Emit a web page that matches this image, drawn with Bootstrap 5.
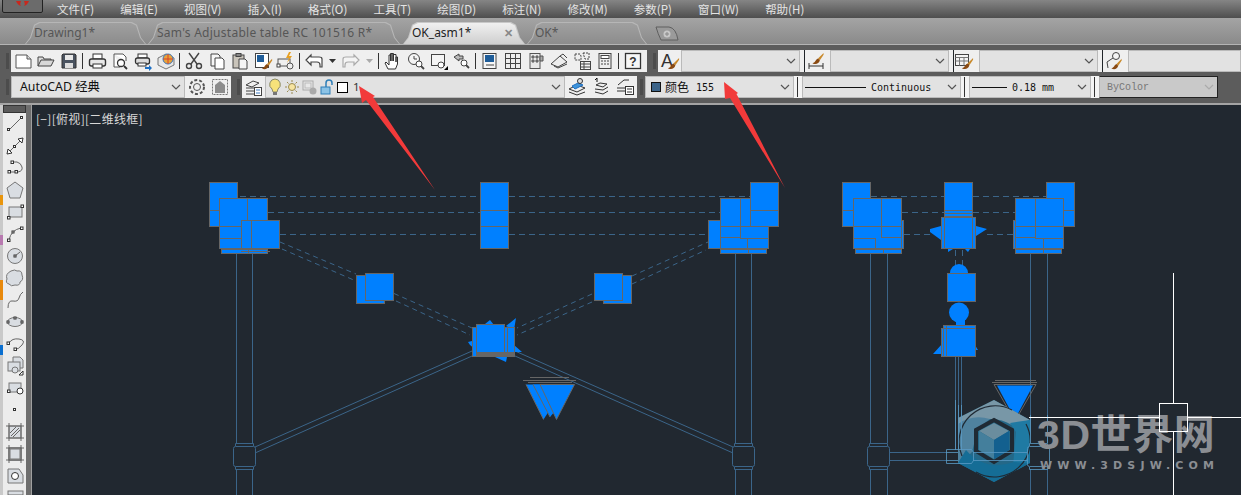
<!DOCTYPE html>
<html lang="en">
<head>
    <meta charset="UTF-8">
    <meta name="viewport" content="width=device-width, initial-scale=1.0">
    <title>AutoCAD</title>
    <link href="https://cdn.jsdelivr.net/npm/bootstrap@5.3.3/dist/css/bootstrap.min.css" rel="stylesheet">
    <style>
        html, body { height: 100%; }
        body {
            width: 1241px; height: 495px; overflow: hidden; position: relative;
            background: #5c5c5c;
            font-family: "Noto Sans", "Noto Sans CJK SC", sans-serif;
        }
        /* menu */
        .menubar {
            height: 18px; padding-left: 57px; gap: 26.2px; position: relative;
            background: linear-gradient(#858585, #4e4e4e);
            color: #e4e4e4; font-size: 11.5px; line-height: 14px;
            font-family: "Noto Sans CJK SC", "Noto Sans", sans-serif;
        }
        .appbtn {
            position: absolute; left: 2px; top: -2px; width: 41px; height: 15px;
            background: #6b6b6b; border: 1px solid #222; border-radius: 0 0 2px 2px;
        }
        /* tabs */
        .tabbar {
            height: 27px; padding: 4px 0 0 25px; gap: 2px;
            background: linear-gradient(#a4a4a4, #8a8a8a);
            border-bottom: 1px solid #b4b4b4;
        }
        .doctab {
            height: 22px; position: relative; font-size: 12px; line-height: 21px; color: #565656;
            background: #b6b6b6;
            clip-path: polygon(0 100%, 5px 70%, 9px 12%, 14px 0, calc(100% - 14px) 0, calc(100% - 9px) 12%, calc(100% - 5px) 70%, 100% 100%);
        }
        .doctab::before {
            content: ""; position: absolute; inset: 1px 1px 0 1px;
            background: linear-gradient(#a0a0a0, #8c8c8c);
            clip-path: polygon(0 100%, 5px 70%, 9px 12%, 14px 0, calc(100% - 14px) 0, calc(100% - 9px) 12%, calc(100% - 5px) 70%, 100% 100%);
        }
        .doctab.on { background: #c8c8c8; color: #222; }
        .doctab.on::before { background: linear-gradient(#f0f0f0, #cfcfcf); }
        .doctab span { position: relative; white-space: nowrap; }
        .doctab .tabx { position: absolute; right: 12px; top: 0; color: #888; font-size: 11px; font-weight: 700; }
        .tab-a { width: 121px; padding-left: 9px; }
        .tab-b { width: 252px; padding-left: 9px; letter-spacing: .26px; }
        .tab-c { width: 122px; padding-left: 9px; margin-left: 1px; }
        .tab-d { width: 120px; padding-left: 8px; }
        .tabadd { margin: 3px 0 0 6px; }
        /* toolbars */
        .toolrow { padding-left: 3px; }
        .toolrow.first { height: 27px; padding-top: 5px; }
        .toolrow.second { height: 33px; padding-top: 4px; border-bottom: 2px solid #a4a4a4; }
        .grip {
            width: 8px; height: 22px; flex: none; background-color: #4c4c4c;
            background-image: radial-gradient(#111 45%, transparent 50%);
            background-size: 2px 2px; background-origin: content-box;
            background-clip: content-box; padding: 3px 2.5px;
        }
        .gripgap { margin-left: 3px; }
        .toolbody { background: #efefef; height: 22px; flex: none; }
        .body-main { width: 636px; }
        .tbtn { width: 23px; height: 22px; flex: none; }
        .tbtn-l { width: 24px; height: 22px; flex: none; }
        .tbtn-w { width: 30px; height: 22px; flex: none; position: relative; }
        .tnar { width: 14px; height: 22px; flex: none; }
        .tsep { width: 1px; height: 16px; margin: 0 2px; background: #333; flex: none; }
        .combo {
            height: 22px; flex: none; background: #e2e2e2; border: 1px solid #bababa;
            padding: 0 3px 0 8px; font-size: 12px; color: #111; white-space: nowrap;
        }
        .combo .chev { margin-left: auto; flex: none; }
        .monotxt { font-family: "DejaVu Sans Mono", "Liberation Mono", monospace; font-size: 10px; color: #111; }
        .wstxt { font-size: 12.3px; }
        .wc-119 { width: 119px; }
        .wc-rest { flex: 1 1 0; padding-right: 0; }
        .wc-174 { width: 174px; }
        .wc-300 { width: 300px; padding-left: 2px; }
        .wc-149 { width: 149px; padding-left: 5px; }
        .wc-159 { width: 159px; padding-left: 2px; }
        .wc-122 { width: 122px; padding-left: 2px; }
        .wc-dis { width: 119px; padding-left: 7px; background: #c9c9c9; border-color: #222; border-left-color: #b4b4b4; }
        .vsep2 { width: 8px; height: 22px; flex: none; background: #f4f4f4; position: relative; }
        .vsep2::before { content: ""; position: absolute; left: 3px; top: 1px; bottom: 1px; width: 1px; background: #333; }
        .bycolor { font-family: "Liberation Mono", monospace; font-size: 10px; color: #777; }
        .layic { margin-left: 3px; flex: none; }
        .layerno { font-size: 11.5px; color: #333; margin-left: 5px; }
        .colorsw { width: 10px; height: 10px; background: #3c6489; border: 1px solid #111; margin-right: 4px; }
        .colortxt { font-family: "Noto Sans CJK SC", sans-serif; font-size: 12px; margin-right: 7px; }
        .lineswatch { width: 61px; height: 1px; background: #111; margin: 0 5px 0 0; flex: none; }
        .lineswatch-s { width: 35px; height: 1px; background: #111; margin: 0 5px 0 0; flex: none; }
        /* body */
        .workspace { height: 390px; }
        .deskstrip {
            width: 3px; flex: none;
            background: linear-gradient(#c9c9c9 90px, #e9950c 90px 100px, #c9c9c9 100px 130px, #b87ab0 130px 140px, #c9c9c9 140px 175px, #e8890c 175px 195px, #c9c9c9 195px 240px, #0a6fd0 240px 250px, #c9c9c9 250px);
        }
        .palette { width: 23px; flex: none; background: #ececec; overflow: hidden; }
        .palhead { height: 8px; background: #5a5a5a; border: 1px solid #333; flex: none; }
        .palhead::before { content: ""; display: block; height: 3px; margin: 1px 4px; background-image: radial-gradient(#111 45%, transparent 50%); background-size: 2px 2px; }
        .palbtn { height: 22px; flex: none; }
        .palgap { width: 5px; flex: none; background: #6e6e6e; }
        .canvas { flex: 1 1 0; position: relative; background: #212830; border-left: 1px solid #a0a0a0; overflow: hidden; }
        .canvas svg.draw { display: block; }
        .viewlabel {
            position: absolute; left: 4px; top: 6px; color: #d8d8d8; font-size: 12px; line-height: 15px;
            font-family: "Noto Sans CJK SC", "Noto Sans", sans-serif; letter-spacing: .3px;
        }
        .bl { fill: #0080ff; stroke: #666; stroke-width: 1; shape-rendering: crispEdges; }
        .sp { fill: #0080ff; }
        .hl { fill: none; stroke: #666; stroke-width: 1; shape-rendering: crispEdges; }
        .gb { fill: #666; }
        .pp { fill: none; stroke: #3b6589; stroke-width: 1; }
        .ppc { fill: none; stroke: #3b6589; stroke-width: 1; shape-rendering: crispEdges; }
        .ppw { fill: none; stroke: #5a9ac4; stroke-width: 1; opacity: .8; }
        .dh { fill: none; stroke: #3b6589; stroke-width: 1; stroke-dasharray: 6 4; shape-rendering: crispEdges; }
        .dd { fill: none; stroke: #3b6589; stroke-width: 1; stroke-dasharray: 5 4; }
        .xh { fill: none; stroke: #fff; stroke-width: 1; shape-rendering: crispEdges; }
        .wm3d { font-family: "Liberation Sans", "Noto Sans CJK SC", sans-serif; font-weight: 700; font-size: 41px; letter-spacing: .6px; fill: #8b8e93; }
        .wmurl { font-family: "DejaVu Sans", sans-serif; font-weight: 700; font-size: 11px; fill: #8b8e93; }
        .arrows { position: absolute; left: 0; top: 0; pointer-events: none; }
        .ic { display: block; margin: 1px auto 0; }
        .pi { display: block; margin: 1px auto 0; }
        .pi path, .pi circle, .pi rect, .pi ellipse { fill: none; stroke: #666; }
        .pi .n { fill: #fff; stroke: #333; }
        .pi .g { fill: #d9dde2; stroke: #777; }
    </style>
</head>
<body>
    <svg width="0" height="0" class="position-absolute">
        <defs>
            <symbol id="chev" viewBox="0 0 10 6"><path d="M1 1l4 4 4-4" fill="none" stroke="#555" stroke-width="1.2"/></symbol>
            <symbol id="brush" viewBox="0 0 14 14"><path d="M13 1L7 7l2 2 4-6z" fill="#c98a2c"/><path d="M7 7c-3 1-2 4-6 5 3 2 7 1 8-3z" fill="#8a4a12"/></symbol>
        </defs>
    </svg>

    <div class="menubar d-flex align-items-center">
        <div class="appbtn"><svg width="39" height="13" class="d-block"><path d="M13 2q2 5 6 5q-3 0-1-5M26 2q-2 5-6 5q3 0 1-5" fill="#c8281e"/></svg></div>
        <span>文件(F)</span><span>编辑(E)</span><span>视图(V)</span><span>插入(I)</span><span>格式(O)</span><span>工具(T)</span><span>绘图(D)</span><span>标注(N)</span><span>修改(M)</span><span>参数(P)</span><span>窗口(W)</span><span>帮助(H)</span>
    </div>

    <div class="tabbar d-flex">
        <div class="doctab tab-a"><span>Drawing1*</span></div>
        <div class="doctab tab-b"><span>Sam's Adjustable table RC 101516 R*</span></div>
        <div class="doctab on tab-c"><span>OK_asm1*</span><span class="tabx">✕</span></div>
        <div class="doctab tab-d"><span>OK*</span></div>
        <svg class="tabadd" width="24" height="17"><path d="M1 2h13q7 1 9 13H6Q3 9 1 2z" fill="#9a9a9a" stroke="#5e5e5e"/><circle cx="12" cy="9" r="3.5" fill="#c8c8c8"/><path d="M12 7v4M10 9h4" stroke="#888"/></svg>
    </div>

    <div class="toolrow first d-flex">
        <div class="grip"></div>
        <div class="toolbody body-main d-flex align-items-center">
            <div class="tbtn"><svg class="ic" width="20" height="20"><path d="M3 4h11l4 4v9H3z" fill="#fff" stroke="#555"/><path d="M14 4v4h4" fill="#ddd" stroke="#555"/></svg></div>
            <div class="tbtn"><svg class="ic" width="20" height="20"><path d="M2 15V6h5l1 2h7v2" fill="#ddd" stroke="#444"/><path d="M2 15l3-6h13l-3 6z" fill="#d8d8d8" stroke="#444"/></svg></div>
            <div class="tbtn"><svg class="ic" width="20" height="20"><path d="M4 3h12l1 1v13H3V4z" fill="#4a5360" stroke="#333"/><rect x="6" y="4" width="8" height="5" fill="#e8e8e8"/><rect x="6" y="12" width="8" height="5" fill="#ddd"/></svg></div>
            <div class="tsep"></div>
            <div class="tbtn"><svg class="ic" width="20" height="20"><rect x="6" y="3" width="9" height="5" fill="#fff" stroke="#333"/><rect x="2.5" y="8" width="16" height="7" rx="2" fill="#e8e8e8" stroke="#333" stroke-width="1.4"/><rect x="6" y="13" width="9" height="4" fill="#fff" stroke="#333"/></svg></div>
            <div class="tbtn"><svg class="ic" width="20" height="20"><path d="M4 3h9l3 3v4M4 3v13h6" fill="#fff" stroke="#555"/><circle cx="11" cy="12" r="3.5" fill="#fff" stroke="#333" stroke-width="1.3"/><path d="M14 15l3 3" stroke="#333" stroke-width="1.8"/></svg></div>
            <div class="tbtn"><svg class="ic" width="20" height="20"><rect x="5" y="3" width="9" height="4" fill="#fff" stroke="#333"/><rect x="2.5" y="7" width="14" height="6" rx="2" fill="#ddd" stroke="#333" stroke-width="1.3"/><rect x="5" y="12" width="8" height="3" fill="#fff" stroke="#333"/><path d="M12 16h4v-2l3 3-3 3v-2h-4z" fill="#1d6fc4"/></svg></div>
            <div class="tbtn"><svg class="ic" width="20" height="20"><path d="M2 7l8-4 8 4v7l-8 4-8-4z" fill="#e8e8e8" stroke="#777"/><circle cx="12" cy="8" r="5" fill="#e8a23a" stroke="#3a78c0"/><path d="M12 3v10M7 8h10" stroke="#d8452a"/></svg></div>
            <div class="tsep"></div>
            <div class="tbtn"><svg class="ic" width="20" height="20" fill="none" stroke="#444" stroke-width="1.4"><path d="M5 2l8 11M15 2L7 13"/><circle cx="5" cy="15" r="2.5"/><circle cx="15" cy="15" r="2.5"/></svg></div>
            <div class="tbtn"><svg class="ic" width="20" height="20" stroke="#444"><path d="M4 3h7l2 2v10H4z" fill="#f6f6f6"/><path d="M8 7h7l2 2v9H8z" fill="#fff"/></svg></div>
            <div class="tbtn"><svg class="ic" width="20" height="20" stroke="#444"><rect x="3" y="4" width="11" height="13" fill="#c9c4ba"/><rect x="6" y="2.5" width="5" height="3" fill="#888"/><path d="M9 8h6l2 2v8H9z" fill="#f4f4f4"/></svg></div>
            <div class="tbtn"><svg class="ic" width="20" height="20"><rect x="2.5" y="2.5" width="13" height="14" fill="#fff" stroke="#444"/><rect x="4" y="4" width="7" height="7" fill="#1f5d99"/><use href="#brush" x="8" y="7" width="12" height="12"/></svg></div>
            <div class="tbtn"><svg class="ic" width="20" height="20"><rect x="2" y="8" width="12" height="7" fill="none" stroke="#555"/><circle cx="14" cy="15" r="3" fill="#eee" stroke="#555"/><rect x="1" y="13" width="3" height="3" fill="#fff" stroke="#444"/><path d="M13 1l-3 6h3l-2 5 5-7h-3l2-4z" fill="#e8a020"/></svg></div>
            <div class="tsep"></div>
            <div class="tbtn"><svg class="ic" width="20" height="20"><path d="M7 4L2 9l5 5v-3h6q3 0 3 3v2h2V8q0-2-3-2H7z" fill="#fff" stroke="#444" stroke-width="1.2"/></svg></div>
            <div class="tnar d-flex align-items-center justify-content-center"><svg width="7" height="4"><path d="M0 0h7L3.5 4z" fill="#333"/></svg></div>
            <div class="tbtn"><svg class="ic" width="20" height="20"><path d="M13 4l5 5-5 5v-3H7q-3 0-3 3v2H2V8q0-2 3-2h8z" fill="#f4f4f4" stroke="#aaa" stroke-width="1.2"/></svg></div>
            <div class="tnar d-flex align-items-center justify-content-center"><svg width="7" height="4"><path d="M0 0h7L3.5 4z" fill="#aaa"/></svg></div>
            <div class="tsep"></div>
            <div class="tbtn"><svg class="ic" width="20" height="20"><path d="M5 18l-3-6 1-1 3 3V4h1.500v6V2.500h1.500V10V2.500h1.500V10V3.500H13V11V6h1.500v7l-2 5z" fill="#fff" stroke="#333"/></svg></div>
            <div class="tbtn"><svg class="ic" width="20" height="20" fill="none" stroke="#444"><circle cx="8" cy="8" r="5.5" fill="#f4f4f4"/><path d="M8 5v3h3"/><circle cx="13" cy="13" r="3" fill="#fff"/><path d="M15 15l3 3" stroke-width="1.8"/></svg></div>
            <div class="tbtn"><svg class="ic" width="20" height="20" fill="none" stroke="#444"><rect x="2.5" y="3.5" width="13" height="11" fill="#f4f4f4"/><circle cx="12" cy="14" r="3" fill="#fff"/><path d="M15 19l4-4v4z" fill="#000" stroke="none"/></svg></div>
            <div class="tbtn"><svg class="ic" width="20" height="20" fill="none" stroke="#444"><path d="M2 6l5-3v2h4v3H7v2z" fill="#bbb"/><circle cx="12" cy="12" r="3" fill="#fff"/><path d="M14 14l3 3" stroke-width="1.8"/></svg></div>
            <div class="tsep"></div>
            <div class="tbtn"><svg class="ic" width="20" height="20" stroke="#444"><rect x="3" y="2.5" width="13" height="15" fill="#f6f6f6"/><rect x="5" y="4" width="9" height="7" fill="#1f5d99" stroke="none"/><path d="M6 14h8"/></svg></div>
            <div class="tbtn"><svg class="ic" width="20" height="20" stroke="#444" fill="#eee"><rect x="2.5" y="2.5" width="15" height="15"/><path d="M7.500 2.500v15M12.500 2.500v15M2.500 7.500h15M2.500 12.500h15" fill="none"/></svg></div>
            <div class="tbtn"><svg class="ic" width="20" height="20" stroke="#555" fill="#e8e8e8"><rect x="4" y="2.500" width="10" height="15"/><path d="M14 5h3v5h-3zM6 5h2v2H6zM10 5h2v2h-2zM6 9h2v2H6zM10 9h2v2h-2z" fill="#aaa"/></svg></div>
            <div class="tbtn"><svg class="ic" width="20" height="20" fill="none" stroke="#444"><path d="M2 13l9-8 7 6-9 5z" fill="#eee"/><path d="M5 15l4 2 9-4M11 5l3-2 4 4"/></svg></div>
            <div class="tbtn"><svg class="ic" width="20" height="20" fill="none" stroke="#444"><path d="M3 3h5l1 2v4H3zM11 2h6v6h-4z" stroke-dasharray="2 1"/><rect x="8.500" y="10.500" width="10" height="8" fill="#f4f4f4"/><path d="M8.500 13h10M8.500 16h10M12 10.500v8"/></svg></div>
            <div class="tbtn"><svg class="ic" width="20" height="20" stroke="#444"><rect x="4" y="2.500" width="12" height="15" fill="#eee"/><rect x="6" y="4.500" width="8" height="3" fill="#fff"/><path d="M6 10h2M9 10h2M12 10h2M6 13h2M9 13h2M12 13h2"/></svg></div>
            <div class="tsep"></div>
            <div class="tbtn"><svg class="ic" width="20" height="20"><rect x="2.500" y="2.500" width="15" height="15" fill="#f6f6f6" stroke="#333" stroke-width="1.3"/><text x="10" y="15" text-anchor="middle" font-family="Liberation Sans, sans-serif" font-weight="700" font-size="12" fill="#333">?</text></svg></div>
        </div>
        <div class="grip gripgap"></div>
        <div class="toolbody d-flex flex-grow-1 align-items-center">
            <div class="tbtn"><svg class="ic" width="20" height="20"><text x="1" y="16" font-family="Liberation Sans, sans-serif" font-size="18" fill="#333">A</text><use href="#brush" x="7" y="6" width="13" height="13"/></svg></div>
            <div class="combo wc-119 d-flex align-items-center"><svg class="chev" width="10" height="6"><use href="#chev"/></svg></div>
            <div class="tbtn-w"><div class="position-absolute top-0 bottom-0 border-start border-dark ms-1"></div><svg class="ic" width="20" height="20"><path d="M4 12v6M4 15h14M18 12v6" stroke="#333" fill="none"/><use href="#brush" x="6" y="1" width="14" height="13"/></svg></div>
            <div class="combo wc-119 d-flex align-items-center"><svg class="chev" width="10" height="6"><use href="#chev"/></svg></div>
            <div class="tbtn-w"><div class="position-absolute top-0 bottom-0 border-start border-dark ms-1"></div><svg class="ic" width="20" height="20"><rect x="1.500" y="3.500" width="13" height="11" fill="#f4f4f4" stroke="#444"/><path d="M1.500 6.500h13M1.500 10h13M5.500 6.500v8M10 6.500v8" stroke="#777" fill="none"/><use href="#brush" x="7" y="6" width="13" height="13"/></svg></div>
            <div class="combo wc-119 d-flex align-items-center"><svg class="chev" width="10" height="6"><use href="#chev"/></svg></div>
            <div class="tbtn-w"><div class="position-absolute top-0 bottom-0 border-start border-dark ms-1"></div><svg class="ic" width="20" height="20"><circle cx="13" cy="5" r="3.500" fill="#f4f4f4" stroke="#444"/><path d="M10 7L4 11l1 6" fill="none" stroke="#444"/><use href="#brush" x="7" y="7" width="13" height="12"/></svg></div>
            <div class="combo wc-rest d-flex align-items-center"></div>
        </div>
    </div>

    <div class="toolrow second d-flex">
        <div class="grip"></div>
        <div class="toolbody d-flex align-items-center">
            <div class="combo wc-174 wstxt d-flex align-items-center">AutoCAD 经典<svg class="chev" width="10" height="6"><use href="#chev"/></svg></div>
            <div class="tbtn"><svg class="ic" width="20" height="20" fill="none" stroke="#555"><circle cx="10" cy="10" r="3.500"/><circle cx="10" cy="10" r="7" stroke-dasharray="3 2" stroke-width="2"/></svg></div>
            <div class="tbtn"><svg class="ic" width="20" height="20"><rect x="2.500" y="2.500" width="15" height="15" fill="none" stroke="#777" stroke-dasharray="2 1"/><path d="M5 16V8l5-4 5 4v8z" fill="#8c8c8c"/></svg></div>
        </div>
        <div class="grip gripgap"></div>
        <div class="toolbody d-flex align-items-center">
            <div class="tbtn"><svg class="ic" width="20" height="20" fill="none" stroke="#444"><path d="M2 8l7-4 6 2-7 4zM2 11h8M2 14h8M2 17h8"/><rect x="10.500" y="10.500" width="7" height="8" fill="#fff"/><path d="M12 13h4M12 16h4" stroke="#3a78c0"/></svg></div>
            <div class="combo wc-300 d-flex align-items-center">
                <svg class="flex-none" width="14" height="18"><path d="M7 1a5.500 5.500 0 0 1 3 10l-1 3H5l-1-3A5.500 5.500 0 0 1 7 1z" fill="#f7e27a" stroke="#8a8a6a"/><rect x="5" y="14" width="4" height="3" fill="#777"/></svg>
                <svg class="layic" width="14" height="14" stroke="#9a8a50"><circle cx="7" cy="7" r="3.500" fill="#f7e4a0"/><path d="M7 0v2M7 12v2M0 7h2M12 7h2M2 2l1.500 1.500M12 2l-1.500 1.500M2 12l1.500-1.500M12 12l-1.500-1.500"/></svg>
                <svg class="layic" width="15" height="15"><rect x="1" y="1" width="10" height="9" fill="#e8e8e8" stroke="#aaa"/><rect x="3" y="3" width="6" height="5" fill="none" stroke="#bbb"/><circle cx="11" cy="11" r="3.500" fill="#aaa"/></svg>
                <svg class="layic" width="14" height="16"><path d="M6 8V4a3 3 0 0 1 6 0v2" fill="none" stroke="#2f7fb8" stroke-width="1.500"/><rect x="1" y="8" width="9" height="7" fill="#8cc3e6" stroke="#2f7fb8"/></svg>
                <svg class="layic" width="11" height="11"><rect x=".5" y=".5" width="10" height="10" fill="#fff" stroke="#000"/></svg>
                <span class="layerno">1</span>
                <svg class="chev" width="10" height="6"><use href="#chev"/></svg>
            </div>
            <div class="tbtn-l"><svg class="ic" width="20" height="20" fill="none" stroke="#333"><path d="M2 12l8-4 8 3-8 4zM2 15l8 3 8-3"/><path d="M5 9l6-3 5 2-8 4z" fill="#3f93d8" stroke="#1d6fc4"/><circle cx="13" cy="4" r="2.500" fill="#ddd"/></svg></div>
            <div class="tbtn-l"><svg class="ic" width="20" height="20" fill="none" stroke="#333"><path d="M5 8l4-2 7 1-4 3zM4 12l8 1 5-3M4 15l8 2 5-3"/><path d="M6 1v4M4 3l2-2" stroke="#111"/></svg></div>
            <div class="tbtn-l"><svg class="ic" width="20" height="20" fill="none" stroke="#333"><path d="M3 8l6-5h5M2 11h8M2 14h8"/><rect x="10.500" y="9.500" width="8" height="8" fill="#fff"/><path d="M12 12h5M12 15h5"/></svg></div>
        </div>
        <div class="grip"></div>
        <div class="toolbody d-flex align-items-center">
            <div class="combo wc-149 d-flex align-items-center"><span class="colorsw"></span><span class="colortxt">颜色</span><span class="monotxt">155</span><svg class="chev" width="10" height="6"><use href="#chev"/></svg></div>
            <div class="vsep2"></div>
            <div class="combo wc-159 d-flex align-items-center"><span class="lineswatch"></span><span class="monotxt">Continuous</span><svg class="chev" width="10" height="6"><use href="#chev"/></svg></div>
            <div class="vsep2"></div>
            <div class="combo wc-122 d-flex align-items-center"><span class="lineswatch-s"></span><span class="monotxt">0.18 mm</span><svg class="chev" width="10" height="6"><use href="#chev"/></svg></div>
            <div class="vsep2"></div>
            <div class="combo wc-dis d-flex align-items-center"><span class="bycolor">ByColor</span><svg class="chev opacity-25" width="10" height="6"><use href="#chev"/></svg></div>
        </div>
    </div>

    <div class="workspace d-flex">
        <div class="deskstrip"></div>
        <div class="palette d-flex flex-column">
            <div class="palhead"></div>
            <div class="palbtn"><svg class="pi" width="20" height="20"><path d="M4 16L16 4"/><rect class="n" x="2.500" y="14.500" width="2" height="2"/><rect class="n" x="15.500" y="2.500" width="2" height="2"/></svg></div>
            <div class="palbtn"><svg class="pi" width="20" height="20"><path d="M4 16L16 4"/><rect class="n" x="8.500" y="9.500" width="2" height="2"/><path d="M2 18l5-1-4-4zM18 2l-5 1 4 4z" class="n"/></svg></div>
            <div class="palbtn"><svg class="pi" width="20" height="20"><path d="M5 14h8q5-1 4-5t-5-5H8"/><rect class="n" x="3" y="12.500" width="2.500" height="2.500"/><rect class="n" x="10" y="12.500" width="2.500" height="2.500"/><rect class="n" x="6" y="3" width="2.500" height="2.500"/></svg></div>
            <div class="palbtn"><svg class="pi" width="20" height="20"><path class="g" d="M10 2l8 6-3 10H5L2 8z"/></svg></div>
            <div class="palbtn"><svg class="pi" width="20" height="20"><rect class="g" x="4" y="5" width="13" height="10"/><rect class="n" x="2.500" y="14.500" width="2.500" height="2.500"/><rect class="n" x="16" y="3" width="2.500" height="2.500"/></svg></div>
            <div class="palbtn"><svg class="pi" width="20" height="20"><path d="M4 16Q6 6 16 4"/><rect class="n" x="2.500" y="15" width="2.500" height="2.500"/><rect class="n" x="15.500" y="3" width="2.500" height="2.500"/><rect class="n" x="7" y="7" width="2" height="2"/></svg></div>
            <div class="palbtn"><svg class="pi" width="20" height="20"><circle class="g" cx="10" cy="10" r="7.500"/><path d="M10 10l5-4"/><rect class="n" x="9" y="9" width="2" height="2"/></svg></div>
            <div class="palbtn"><svg class="pi" width="20" height="20"><path class="g" d="M6 3q4-2 6 0 5-1 5 4 2 5-2 7 0 4-5 3-4 2-6-1-4-1-2-5-2-5 4-8z"/></svg></div>
            <div class="palbtn"><svg class="pi" width="20" height="20"><path d="M3 18Q3 10 8 11t6-3 4-6"/></svg></div>
            <div class="palbtn"><svg class="pi" width="20" height="20"><ellipse class="g" cx="10" cy="10" rx="7.500" ry="4.500"/><rect class="n" x="2" y="9" width="2" height="2"/><rect class="n" x="16" y="9" width="2" height="2"/><rect class="n" x="9" y="5" width="2" height="2"/></svg></div>
            <div class="palbtn"><svg class="pi" width="20" height="20"><path d="M4 9Q7 4 14 5t3 6-7 4"/><rect class="n" x="2" y="8" width="2.500" height="2.500"/><rect class="n" x="9" y="14" width="2.500" height="2.500"/></svg></div>
            <div class="palbtn"><svg class="pi" width="20" height="20"><path class="g" d="M8 1h7l3 3v8H8z"/><rect class="g" x="3" y="6" width="12" height="9"/><circle class="g" cx="10" cy="14" r="3"/><path d="M14 19l4-4v4z" class="n"/></svg></div>
            <div class="palbtn"><svg class="pi" width="20" height="20"><rect class="g" x="4" y="5" width="12" height="9"/><circle class="n" cx="15" cy="13" r="3"/><rect class="n" x="2.500" y="12" width="2.500" height="2.500"/></svg></div>
            <div class="palbtn"><svg class="pi" width="20" height="20"><rect class="n" x="8.500" y="8.500" width="2" height="2"/></svg></div>
            <div class="palbtn"><svg class="pi" width="20" height="20"><rect class="g" x="4" y="4" width="12" height="12"/><path d="M1 4h18M1 16h18M4 1v18M16 1v18M6 14l8-8M8 15l7-7M5 11l6-6"/></svg></div>
            <div class="palbtn"><svg class="pi" width="20" height="20"><rect class="n" x="4" y="4" width="12" height="12"/><path d="M1 4h18M1 16h18M4 1v18M16 1v18"/><rect x="5" y="5" width="10" height="10" class="g"/></svg></div>
            <div class="palbtn"><svg class="pi" width="20" height="20"><path class="g" d="M3 3h11l4 6v8H3z"/><circle class="n" cx="10" cy="10" r="3.500"/></svg></div>
            <div class="palbtn"><svg class="pi" width="20" height="20"><rect class="g" x="3" y="3" width="15" height="16"/><path d="M3 7h15"/></svg></div>
        </div>
        <div class="palgap"></div>
        <div class="canvas">
            <svg class="draw" width="1209" height="390" viewBox="32 105 1209 390">
                <!-- dashed beams -->
                <path class="dh" d="M240 196.500H480M509 196.500H750M871 196.500H944M973 196.500H1046M268 212.500H480M509 212.500H720M902 212.500H944M973 212.500H1016M280 234.500H480M509 234.500H708M904 234.500H931M987 234.500H1014"/>
                <path class="dh" d="M955.500 250V268M962.500 250V268"/>
                <!-- diagonals -->
                <path class="dd" d="M280 242L356 274M394 293.500L472 328M282 249L356 281M396 301L470 335M632 276L708 242M632 284L706 250M592 294L517 328M592 302L517 335"/>
                <path class="pp" d="M255 447L472 351M255 453L472 356M515 351L733 447M515 356L733 453"/>
                <!-- columns -->
                <path class="ppc" d="M236.500 253V443M252.500 253V443M236.500 469V495M252.500 469V495M735.500 253V443M751.500 253V443M735.500 469V495M751.500 469V495M870.500 253V443M887.500 253V443M870.500 469V495M887.500 469V495M1030.500 253V443M1047.500 253V443M1030.500 469V495M1047.500 469V495M955.500 357V450M958.500 357V450M961.500 357V450"/>
                <g class="pp">
                    <rect x="233.500" y="446.500" width="22" height="20" rx="2"/><path d="M235.500 446V443.500H253.500V446M235.500 467V469.500H253.500V467"/>
                    <rect x="732.500" y="446.500" width="22" height="20" rx="2"/><path d="M734.500 446V443.500H752.500V446M734.500 467V469.500H752.500V467"/>
                    <rect x="867.500" y="446.500" width="22" height="20" rx="2"/><path d="M869.500 446V443.500H887.500V446M869.500 467V469.500H887.500V467"/>
                </g>
                <path class="ppc" d="M889 452.500H946M889 460.500H946"/>

                <!-- left stack -->
                <rect class="bl" x="221.500" y="249.500" width="46" height="4"/>
                <rect class="bl" x="209.500" y="182.500" width="28" height="44"/>
                <path class="hl" d="M209.500 210.500H219.500"/>
                <rect class="bl" x="219.500" y="198.500" width="48" height="50"/>
                <path class="hl" d="M219.500 226.500H267.500M219.500 238.500H241.500M247.500 198.500V226.500"/>
                <rect class="bl" x="241.500" y="220.500" width="38" height="28"/>
                <path class="hl" d="M251.500 220.500V248.500M240.500 251.500H269.500M248.500 249.500V253.500"/>

                <!-- middle stack -->
                <rect class="bl" x="480.500" y="182.500" width="28" height="66"/>
                <path class="hl" d="M480.500 210.500H508.500M480.500 226.500H508.500"/>

                <!-- small plates -->
                <rect class="bl" x="356.500" y="275.500" width="28" height="28"/>
                <rect class="bl" x="365.500" y="273.500" width="28" height="27"/>
                <rect class="bl" x="603.500" y="275.500" width="28" height="28"/>
                <rect class="bl" x="594.500" y="273.500" width="28" height="27"/>

                <!-- hub -->
                <path class="sp" d="M468 342L476 340V350L470 345ZM485 324L490 320L494 325ZM506 326L516 318L514 330ZM514 345L522 352H514ZM495 357L507 357L506 362Z"/>
                <rect class="bl" x="472.500" y="327.500" width="42" height="29"/>
                <rect class="gb" x="476" y="352" width="38" height="5"/>
                <rect class="bl" x="476.500" y="324.500" width="28" height="28"/>
                <path class="hl" d="M507.500 326.500V352.500"/>

                <!-- drop triangle -->
                <path class="hl" d="M530 377.500H569M523 380.500H576M528 382.500H572"/>
                <path class="sp" d="M526 384.500L543.500 419.500L549 411V384.500Z"/>
                <path class="sp" d="M533 384.500L550 417L556 410V384.500Z"/>
                <path class="sp" d="M540 384.500H574.500L556.500 419.500Z"/>
                <path d="M526 384.500L543.500 419.500M533 384.500L550 417" fill="none" stroke="#666"/>
                <path d="M540 384.500H574.500L556.500 419.500Z" fill="none" stroke="#666"/>

                <!-- stack 3 -->
                <rect class="bl" x="720.500" y="249.500" width="46" height="4"/>
                <rect class="bl" x="708.500" y="220.500" width="28" height="28"/>
                <rect class="bl" x="720.500" y="198.500" width="48" height="50"/>
                <path class="hl" d="M720.500 226.500H768.500M720.500 237.500H740.500M740.500 198.500V238.500M740.500 238.500H768.500M747.500 238.500V248.500M708.500 248.500H746.500M748.500 249.500V253.500"/>
                <rect class="bl" x="750.500" y="182.500" width="28" height="44"/>
                <path class="hl" d="M750.500 210.500H778.500"/>

                <!-- stack 4 -->
                <rect class="bl" x="855.500" y="249.500" width="46" height="4"/>
                <rect class="bl" x="842.500" y="182.500" width="28" height="44"/>
                <path class="hl" d="M842.500 210.500H853.500"/>
                <rect class="bl" x="875.500" y="220.500" width="28" height="28"/>
                <rect class="bl" x="853.500" y="198.500" width="48" height="50"/>
                <path class="hl" d="M853.500 226.500H901.500M881.500 198.500V237.500M881.500 237.500H901.500M853.500 238.500H875.500M875.500 238.500V248.500M875.500 248.500H903.500M883.500 249.500V253.500"/>

                <!-- stack 5 -->
                <path class="sp" d="M930 229L941 226V240L930 232ZM976 226L987 229L976 236ZM948 249H953L948 252ZM965 249H970L968 252Z"/>
                <rect class="bl" x="944.500" y="182.500" width="28" height="34"/>
                <path class="hl" d="M944.500 210.500H972.500M944.500 213.500H972.500"/>
                <rect class="bl" x="941.500" y="217.500" width="34" height="31"/>
                <rect class="bl" x="944.500" y="217.500" width="28" height="31"/>
                <path class="sp" d="M950 273A9 9 0 0 1 968 273Z"/>
                <rect class="bl" x="947.500" y="273.500" width="28" height="28"/>
                <circle class="sp" cx="959" cy="312.500" r="10"/>
                <rect class="sp" x="956" y="318" width="9" height="9"/>
                <path class="sp" d="M933 354L942 344V354ZM975 345L978 350H975Z"/>
                <rect class="bl" x="941.500" y="328.500" width="34" height="28"/>
                <rect class="bl" x="943.500" y="325.500" width="32" height="31"/>
                <path class="hl" d="M946.500 325.500V356.500M943.500 328.500H975.500"/>

                <!-- stack 6 -->
                <rect class="bl" x="1015.500" y="249.500" width="46" height="4"/>
                <rect class="bl" x="1046.500" y="182.500" width="28" height="44"/>
                <path class="hl" d="M1046.500 210.500H1074.500"/>
                <rect class="bl" x="1013.500" y="220.500" width="28" height="28"/>
                <rect class="bl" x="1015.500" y="198.500" width="48" height="50"/>
                <path class="hl" d="M1015.500 226.500H1063.500M1015.500 237.500H1035.500M1035.500 198.500V238.500M1035.500 238.500H1063.500M1043.500 238.500V248.500M1013.500 248.500H1043.500M1043.500 249.500V253.500"/>

                <!-- right triangle -->
                <path class="hl" d="M995 380.500H1036M992 382.500H1037"/>
                <path class="sp" d="M997 385.500H1033L1015 419Z"/>
                <path d="M994 384.500H1036L1015 421Z" fill="none" stroke="#666"/>

                <!-- watermark -->
                <path d="M994 400L1030 420V463L994 482L958 463V418Z" fill="#25789f" opacity=".8"/>
                <path d="M994 400L1030 420L1012 425Q994 414 972 423L958 434V418Z" fill="#7897a7"/>
                <path d="M958 424Q972 414 990 419L978 428L972 452L962 462L958 463Z" fill="#4f829f"/>
                <path d="M1030 420V463L1013 466L1016 432L1010 423Z" fill="#1f7aa3"/>
                <path d="M966 450Q985 472 1014 462L1030 463L994 482L958 463Z" fill="#156d96"/>
                <path d="M962 456A36 36 0 0 1 1012 410M1026 424A36 36 0 0 1 976 472" fill="none" stroke="#1f2a34" stroke-width="1.2"/>
                <path d="M994 420L1012 430V451L994 462L976 451V430Z" fill="none" stroke="#1f2a34" stroke-width="4"/>
                <path d="M994 423L1009 431L994 440L979 431Z" fill="#6a8d9e"/>
                <path d="M979 431L994 440V459L979 450Z" fill="#447f9c"/>
                <path d="M1009 431L994 440V459L1009 450Z" fill="#13608f"/>
                <g class="ppw">
                    <path d="M955.500 400V450M958.500 405V450M961.500 405V450M1030.500 415V443M1047.500 415V443M958 452.500H946M958 460.500H946M973 452.500H1027M973 460.500H1027M946.500 449.500H971.500L973.500 452.500V460.500L971.500 463.500H946.500Z"/>
                    <rect x="1027.500" y="446.500" width="22" height="20" rx="2"/><path d="M1029.500 446V443.500H1047.500V446M1029.500 467V469.500H1047.500V467"/>
                </g>
                <path class="ppc" d="M1030.500 470V495M1047.500 470V495"/>
                <text class="wm3d" x="1037" y="449">3D世界网</text>
                <text class="wmurl" x="1040" y="469" textLength="174" lengthAdjust="spacing">WWW.3DSJW.COM</text>

                <!-- crosshair -->
                <path class="xh" d="M1173.500 273V403M1173.500 431V495M1029 417.500H1159M1187 417.500H1241"/>
                <rect class="xh" x="1159.500" y="403.500" width="28" height="28"/>
            </svg>
            <div class="viewlabel">[−][俯视][二维线框]</div>
        </div>
    </div>

    <svg class="arrows" width="1241" height="495">
        <path d="M359 86L375 96L373 97L435 190L366 100L362 103Z" fill="#f23a3a"/>
        <path d="M724 82L738 93L736.500 94L785 188L730 98L725 99Z" fill="#f23a3a"/>
    </svg>
</body>
</html>
